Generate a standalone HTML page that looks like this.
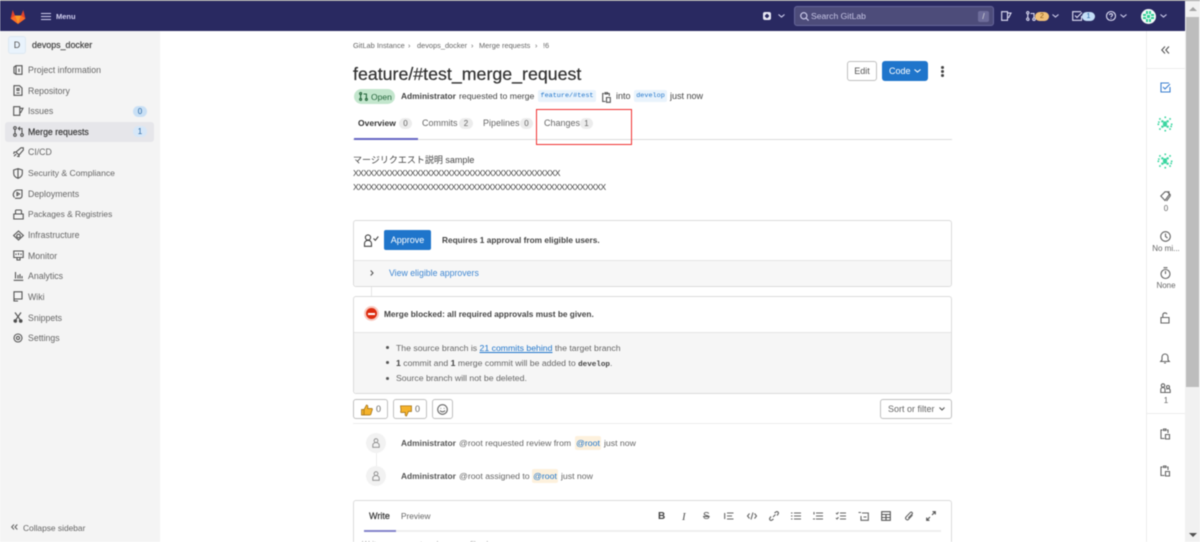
<!DOCTYPE html>
<html lang="ja"><head><meta charset="utf-8"><title>feature/#test_merge_request</title>
<style>
html,body{margin:0;padding:0;width:1200px;height:542px;overflow:hidden;background:#fff}
body{font-family:"Liberation Sans","Noto Sans CJK JP",sans-serif;font-size:9px;color:#303030;position:relative}
#root{position:absolute;left:0;top:0;width:1200px;height:542px;overflow:hidden;filter:blur(.45px)}
.a{position:absolute}
.t{position:absolute;white-space:nowrap;line-height:14px;height:14px;font-size:9px}
.b{font-weight:bold}
.g{color:#666}
.s{font-size:8.75px}
.bc{font-size:7.4px;top:39px;color:#666}
.l{color:#1f75cb}
.m{font-family:"Liberation Mono",monospace}
svg.i{position:absolute;fill:none;stroke:#555;stroke-width:1.1;overflow:visible}
.pill{position:absolute;border-radius:7px;height:11px;line-height:11px;text-align:center;font-size:8px;background:#ececec;color:#666}
.box{position:absolute;box-sizing:border-box;border:1px solid #dbdbdb;border-radius:3px;background:#fff}
.btn{position:absolute;box-sizing:border-box;border:1px solid #bfbfbf;border-radius:3px;background:#fff;text-align:center;font-size:9px;color:#444}
.code{position:absolute;background:#e9f3fc;color:#1f75cb;font-family:"Liberation Mono",monospace;font-size:6.8px;height:12px;line-height:12px;border-radius:2px;text-align:center}
.ref{position:absolute;height:14px;line-height:14px;background:#fdf1dd;color:#1f75cb;border-radius:2px;text-align:center;font-size:8.7px}
</style></head><body><div id="root">

<!-- header -->
<div class="a" style="left:0;top:0;width:1200px;height:1px;background:#999"></div>
<div class="a" style="left:0;top:1px;width:1185px;height:30px;background:#292961"></div>
<svg class="a" style="left:10px;top:9px" width="16" height="15" viewBox="0 0 16 15"><path fill="#e24329" d="M8 15 L0.6 9.5 L2.7 1 L5 6.5 H11 L13.3 1 L15.4 9.5Z"/><path fill="#fc6d26" d="M8 15 L0.6 9.5 L5 6.5Z M8 15 L15.4 9.5 L11 6.5Z"/><path fill="#fca326" d="M8 15 L5 6.5 H11Z" opacity=".9"/></svg>
<div class="a" style="left:41px;top:13px;width:10px;height:1.4px;background:#d1d0f0;box-shadow:0 3px 0 #d1d0f0,0 6px 0 #d1d0f0"></div>
<div class="t b" style="left:56px;top:10px;color:#d1d0f0;font-size:7.5px">Menu</div>

<div class="a" style="left:763px;top:12px;width:8px;height:8px;background:#e8e8f4;border-radius:2px"></div>
<div class="a" style="left:766px;top:14px;width:2px;height:4px;background:#292961"></div>
<div class="a" style="left:765px;top:15px;width:4px;height:2px;background:#292961"></div>
<svg class="i" style="left:778px;top:14px;stroke:#d1d0f0" width="7" height="4" viewBox="0 0 7 4"><path d="M.5.5 3.500 3 6.500.5"/></svg>
<div class="a" style="left:794px;top:6px;width:200px;height:20px;box-sizing:border-box;background:#4d4c7a;border:1px solid #67669a;border-radius:3px"></div>
<svg class="i" style="left:800px;top:12px;stroke:#d1d0f0" width="9" height="9" viewBox="0 0 9 9"><circle cx="3.8" cy="3.8" r="3.1"/><path d="M6 6 8.600 8.600"/></svg>
<div class="t" style="left:811px;top:9px;color:#c5c4e4;font-size:8.6px">Search GitLab</div>
<div class="a" style="left:978px;top:11px;width:11px;height:11px;background:#6d6c9a;border-radius:2px;color:#ddd;font-size:8px;line-height:11px;text-align:center">/</div>
<svg class="i" style="left:1001px;top:11px;stroke:#e0dff5" width="11" height="10" viewBox="0 0 11 10"><path d="M.7.7H6.500V9.300H.7Z M6.500 2H10L7.500 7"/></svg>
<svg class="i" style="left:1026px;top:11px;stroke:#e0dff5" width="10" height="10" viewBox="0 0 10 10"><circle cx="1.8" cy="1.8" r="1.2"/><circle cx="1.8" cy="8.2" r="1.2"/><circle cx="8" cy="8.2" r="1.2"/><path d="M1.800 3V7M8 7V2.500H4.500"/></svg>
<div class="a" style="left:1035px;top:12px;width:14px;height:9px;border-radius:5px;background:#f0c078;color:#8a5a10;font-size:7px;line-height:9px;text-align:center">2</div>
<svg class="i" style="left:1052px;top:14px;stroke:#d1d0f0" width="7" height="4" viewBox="0 0 7 4"><path d="M.5.5 3.500 3 6.500.5"/></svg>
<svg class="i" style="left:1072px;top:11px;stroke:#e0dff5" width="11" height="10" viewBox="0 0 11 10"><path d="M9 .7H.7V9.300H9.500V5M3 4.500 5 6.500 10 1.500"/></svg>
<div class="a" style="left:1082px;top:12px;width:13px;height:9px;border-radius:5px;background:#c4def7;color:#1f5f9f;font-size:7px;line-height:9px;text-align:center">1</div>
<svg class="i" style="left:1106px;top:11px;stroke:#e0dff5" width="10" height="10" viewBox="0 0 10 10"><circle cx="5" cy="5" r="4.5"/><path d="M3.500 4C3.500 2.200 6.500 2.200 6.500 4 6.500 5 5 5 5 6.300M5 7.200V8"/></svg>
<svg class="i" style="left:1120px;top:14px;stroke:#d1d0f0" width="7" height="4" viewBox="0 0 7 4"><path d="M.5.5 3.500 3 6.500.5"/></svg>
<svg class="a" style="left:1141px;top:9px" width="15" height="15" viewBox="0 0 15 15"><circle cx="7.500" cy="7.500" r="7.500" fill="#f4fbf8"/><path fill="#2ecf95" d="M5 2h2v3H5zM8 2h2v3H8zM2 5h3v2H2zM10 5h3v2h-3zM2 8h3v2H2zM10 8h3v2h-3zM5 10h2v3H5zM8 10h2v3H8zM6 6h3v3H6z"/></svg>
<svg class="i" style="left:1160px;top:14px;stroke:#d1d0f0" width="7" height="4" viewBox="0 0 7 4"><path d="M.5.5 3.500 3 6.500.5"/></svg>

<!-- scrollbar -->
<div class="a" style="left:1185px;top:1px;width:15px;height:541px;background:#f1f1f1"></div>
<div class="a" style="left:1186px;top:17px;width:13px;height:370px;background:#bdbdbd"></div>
<div class="a" style="left:1188.500px;top:7px;width:0;height:0;border:4px solid transparent;border-bottom:4px solid #a3a3a3;border-top:0"></div>
<div class="a" style="left:1188.500px;top:533px;width:0;height:0;border:4px solid transparent;border-top:4px solid #505050;border-bottom:0"></div>

<!-- left sidebar -->
<div class="a" style="left:0;top:31px;width:160px;height:511px;background:#f4f4f4"></div>
<div class="a" style="left:8px;top:36px;width:18px;height:18px;box-sizing:border-box;background:#e9f3fc;border:1px solid #dde8f2;border-radius:3px;text-align:center;line-height:16px;font-size:9px;color:#555">D</div>
<div class="t" style="left:32px;top:38px;color:#444;font-size:8.900px;-webkit-text-stroke:.2px #444">devops_docker</div>
<div class="a" style="left:5px;top:122px;width:149px;height:20px;background:#e6e6ea;border-radius:3px"></div>

<svg class="i" style="left:13px;top:65px" width="10" height="10" viewBox="0 0 10 10"><path d="M3 .7H9V9.300H3ZM3 .7 1 2V8L3 9.300M6 3.500V7"/></svg>
<div class="t g s" style="left:28px;top:63px">Project information</div>
<svg class="i" style="left:13px;top:85px" width="10" height="11" viewBox="0 0 10 11"><path d="M1 .7H6.500L9 3V10.300H1ZM4 3.500H6V5.500H4ZM3.500 8H6.500"/></svg>
<div class="t g s" style="left:28px;top:84px">Repository</div>
<svg class="i" style="left:13px;top:106px" width="11" height="10" viewBox="0 0 11 10"><path d="M.7.7H6.800V9.300H.7ZM6.800 2.300H10L7.500 7"/></svg>
<div class="t g s" style="left:28px;top:104px">Issues</div>
<div class="pill" style="left:133px;top:106px;width:14px;background:#c9e0f5;color:#2a6aa8">0</div>
<svg class="i" style="left:13px;top:126px" width="11" height="11" viewBox="0 0 11 11"><circle cx="2" cy="2" r="1.3"/><circle cx="2" cy="9" r="1.3"/><circle cx="9" cy="9" r="1.3"/><path d="M2 3.300V7.700M9 7.700V2.500H5.500M7 .8 5.300 2.500 7 4.200"/></svg>
<div class="t s" style="left:28px;top:125px;color:#333;-webkit-text-stroke:.15px #333">Merge requests</div>
<div class="pill" style="left:133px;top:126px;width:14px;background:#d6e7f8;color:#2a6aa8">1</div>
<svg class="i" style="left:13px;top:147px" width="11" height="10" viewBox="0 0 11 10"><path d="M3 5 8 .8H10.300V3L6 8 3 5ZM3 5H1.200L.7 7M6 8V9.500L4 9.300M3.300 7 1 9.200"/></svg>
<div class="t g s" style="left:28px;top:145px">CI/CD</div>
<svg class="i" style="left:13px;top:168px" width="10" height="11" viewBox="0 0 10 11"><path d="M5 .7 9.300 2V5.500C9.300 8 7 9.700 5 10.300 3 9.700.7 8 .7 5.500V2ZM5 1V10"/></svg>
<div class="t g" style="left:28px;top:166px;font-size:8.600px">Security &amp; Compliance</div>
<svg class="i" style="left:13px;top:189px" width="10" height="10" viewBox="0 0 10 10"><path d="M1.500 8.500A4.500 4.500 0 0 1 5 1H9V7A2.500 2.500 0 0 1 6 9.300H2M4 3.500 6.500 5 4 6.500Z"/></svg>
<div class="t g s" style="left:28px;top:187px">Deployments</div>
<svg class="i" style="left:13px;top:209px" width="11" height="11" viewBox="0 0 11 11"><path d="M.8 5H10.200V10H.8ZM2.500 5V2A1 1 0 0 1 3.500 1H7.500A1 1 0 0 1 8.500 2V5"/></svg>
<div class="t g" style="left:28px;top:207px;font-size:8.400px">Packages &amp; Registries</div>
<svg class="i" style="left:13px;top:230px" width="11" height="11" viewBox="0 0 11 11"><path d="M.6 5.500 5.500 1 10.400 5.500 5.500 10Z"/><circle cx="5.500" cy="6" r="1.800"/></svg>
<div class="t g s" style="left:28px;top:228px">Infrastructure</div>
<svg class="i" style="left:13px;top:250px" width="11" height="11" viewBox="0 0 11 11"><path d="M.8 1H10.200V7.500H.8ZM3 3.500V5M5.500 3V5M8 3.500V5M4 7.500V10H7V7.500"/></svg>
<div class="t g s" style="left:28px;top:249px">Monitor</div>
<svg class="i" style="left:13px;top:271px" width="11" height="10" viewBox="0 0 11 10"><path d="M.7 9.300H10.300M2.500 1V7.500M5 4V7.500M7 3V7.500M9 5V7.500"/></svg>
<div class="t g s" style="left:28px;top:269px">Analytics</div>
<svg class="i" style="left:13px;top:291px" width="10" height="11" viewBox="0 0 10 11"><path d="M1 .8H9V8H1ZM1 8V10H5"/></svg>
<div class="t g s" style="left:28px;top:290px">Wiki</div>
<svg class="i" style="left:13px;top:312px" width="10" height="11" viewBox="0 0 10 11"><path d="M2 .5 7 7.500M8 .5 3 7.500"/><circle cx="2.300" cy="9" r="1.300" fill="#444"/><circle cx="7.700" cy="9" r="1.300" fill="#444"/></svg>
<div class="t g s" style="left:28px;top:311px">Snippets</div>
<svg class="i" style="left:13px;top:333px" width="10" height="10" viewBox="0 0 10 10"><circle cx="5" cy="5" r="4"/><circle cx="5" cy="5" r="1.600"/></svg>
<div class="t g s" style="left:28px;top:331px">Settings</div>
<svg class="i" style="left:11px;top:524px;stroke:#666" width="7" height="6" viewBox="0 0 7 6"><path d="M3 .5.7 3 3 5.500M6.300.5 4 3 6.300 5.500"/></svg>
<div class="t g" style="left:23px;top:521px;font-size:8.400px">Collapse sidebar</div>

<!-- right sidebar -->
<div class="a" style="left:1146px;top:31px;width:1px;height:511px;background:#ececec"></div>
<div class="a" style="left:1147px;top:68px;width:38px;height:1px;background:#ececec"></div>
<div class="a" style="left:1147px;top:413px;width:38px;height:1px;background:#ececec"></div>
<svg class="i" style="left:1161px;top:46px" width="9" height="8" viewBox="0 0 9 8"><path d="M4 .5.8 4 4 7.500M8 .5 4.800 4 8 7.500"/></svg>
<svg class="i" style="left:1160px;top:82px;stroke:#3a7fd0" width="11" height="11" viewBox="0 0 11 11"><path d="M9 1H1V10H10V5M3 5 5 7 10 2"/></svg>
<svg class="a" style="left:1157px;top:116px" width="16" height="16" viewBox="0 0 15 15"><path fill="#3ad6a0" d="M4 4h2v2H4zM9 4h2v2H9zM6 5h3v1.500H6zM5.500 6.500h4v2h-4zM4 9h2v2H4zM9 9h2v2H9zM6 8.500h3V10H6zM2 2h1.500v1.500H2zM11.500 2H13v1.500h-1.500zM2 11.500h1.500V13H2zM11.500 11.500H13V13h-1.500zM7 .5h1.500V2H7zM7 13h1.500v1.500H7zM.5 7H2v1.500H.5zM13 7h1.500v1.500H13zM1 5h1.500v1.500H1zM12.500 9H14v1.500h-1.500z"/></svg>
<svg class="a" style="left:1157px;top:153px" width="16" height="16" viewBox="0 0 15 15"><path fill="#3ad6a0" d="M4 4h2v2H4zM9 4h2v2H9zM6 5h3v1.500H6zM5.500 6.500h4v2h-4zM4 9h2v2H4zM9 9h2v2H9zM6 8.500h3V10H6zM2 2h1.500v1.500H2zM11.500 2H13v1.500h-1.500zM2 11.500h1.500V13H2zM11.500 11.500H13V13h-1.500zM7 .5h1.500V2H7zM7 13h1.500v1.500H7zM.5 7H2v1.500H.5zM13 7h1.500v1.500H13zM1 5h1.500v1.500H1zM12.500 9H14v1.500h-1.500z"/></svg>
<svg class="i" style="left:1160px;top:191px;stroke:#666" width="11" height="11" viewBox="0 0 11 11"><path d="M.8 5 5 .8H9V4L5 9.500ZM7.500 1 10.200 3.500V5L6.500 10"/></svg>
<div class="t g" style="left:1147px;top:202px;width:38px;text-align:center;font-size:8px">0</div>
<svg class="i" style="left:1160px;top:231px;stroke:#666" width="11" height="11" viewBox="0 0 11 11"><circle cx="5.500" cy="5.500" r="4.800"/><path d="M5.500 2.500V5.500L7.500 7"/></svg>
<div class="t g" style="left:1147px;top:242px;width:38px;text-align:center;font-size:8px">No mi...</div>
<svg class="i" style="left:1160px;top:267px;stroke:#666" width="11" height="12" viewBox="0 0 11 12"><circle cx="5.500" cy="7" r="4.500"/><path d="M5.500 4V7M3.500.7H7.500"/></svg>
<div class="t g" style="left:1147px;top:279px;width:38px;text-align:center;font-size:8px">None</div>
<svg class="i" style="left:1160px;top:312px;stroke:#666" width="10" height="12" viewBox="0 0 10 12"><path d="M1 5.500H9V11H1ZM2.800 5.500V3A2.200 2.200 0 0 1 7 2.200"/></svg>
<svg class="i" style="left:1160px;top:352px;stroke:#666" width="10" height="12" viewBox="0 0 10 12"><path d="M.7 9.500H9.300L8 8V5A3 3 0 0 0 2 5V8ZM4 11H6"/></svg>
<svg class="i" style="left:1160px;top:383px;stroke:#666" width="11" height="11" viewBox="0 0 11 11"><circle cx="3" cy="2.500" r="1.700"/><circle cx="8" cy="4" r="1.500"/><path d="M.8 9.500V6.500A2 2 0 0 1 5 6.500V9.500ZM5.500 9.500H10.200V7.500A2 2 0 0 0 6.500 6.500"/></svg>
<div class="t g" style="left:1147px;top:394px;width:38px;text-align:center;font-size:8px">1</div>
<svg class="i" style="left:1160px;top:428px;stroke:#666" width="10" height="12" viewBox="0 0 10 12"><path d="M2.500 2H1V10.500H4.500M3.500 2.500V1H6V2.500ZM7 2H8V5M5.500 6.500H9.500V11H5.500Z"/></svg>
<svg class="i" style="left:1160px;top:465px;stroke:#666" width="10" height="12" viewBox="0 0 10 12"><path d="M2.500 2H1V10.500H4.500M3.500 2.500V1H6V2.500ZM7 2H8V5M5.500 6.500H9.500V11H5.500Z"/></svg>

<!-- breadcrumb -->
<div class="t bc" style="left:353px">GitLab Instance</div>
<div class="t bc" style="left:408px">›</div>
<div class="t bc" style="left:417px">devops_docker</div>
<div class="t bc" style="left:471px">›</div>
<div class="t bc" style="left:479px">Merge requests</div>
<div class="t bc" style="left:535px">›</div>
<div class="t bc" style="left:543px">!6</div>

<!-- title -->
<div class="a" style="left:353px;top:62px;white-space:nowrap;font-size:17.800px;line-height:24px;color:#303030;-webkit-text-stroke:.2px #303030">feature/#test_merge_request</div>
<div class="btn" style="left:847px;top:61px;width:30px;height:20px;line-height:18px;color:#555">Edit</div>
<div class="a" style="left:882px;top:61px;width:46px;height:20px;background:#1f75cb;border-radius:3px"></div>
<div class="t" style="left:889px;top:64px;color:#fff">Code</div>
<svg class="i" style="left:914px;top:69px;stroke:#fff" width="7" height="4" viewBox="0 0 7 4"><path d="M.5.5 3.500 3 6.500.5"/></svg>
<div class="a" style="left:941px;top:66px;width:3px;height:3px;border-radius:50%;background:#444;box-shadow:0 4px 0 #444,0 8px 0 #444"></div>

<!-- status line -->
<div class="a" style="left:354px;top:89px;width:41px;height:15px;border-radius:8px;background:#c3e6cd"></div>
<svg class="i" style="left:359px;top:92px;stroke:#24663b" width="9" height="9" viewBox="0 0 9 9"><circle cx="1.600" cy="1.600" r="1"/><circle cx="1.600" cy="7.400" r="1"/><circle cx="7.400" cy="7.400" r="1"/><path d="M1.600 2.600V6.400M7.400 6.400V2H4.500"/></svg>
<div class="t" style="left:371px;top:90px;color:#24663b;font-size:8.500px">Open</div>
<div class="t b" style="left:401px;top:89px;font-size:8.400px;color:#444">Administrator</div>
<div class="t" style="left:459px;top:89px;font-size:8.700px;color:#444">requested to merge</div>
<div class="code" style="left:538px;top:90px;width:58px">feature/#test</div>
<svg class="i" style="left:602px;top:92px;stroke:#555" width="9" height="11" viewBox="0 0 9 11"><path d="M2 1.500H.7V9.500H3.500M3 2V.7H5.500V2ZM6 1.500H7.300V4M4.500 5.500H8.300V10.300H4.500Z"/></svg>
<div class="t" style="left:616px;top:89px;color:#444">into</div>
<div class="code" style="left:634px;top:90px;width:33px">develop</div>
<div class="t" style="left:670px;top:89px;color:#444">just now</div>

<!-- tabs -->
<div class="a" style="left:353px;top:139px;width:599px;height:1px;background:#dcdcdc"></div>
<div class="a" style="left:354px;top:138px;width:64px;height:2px;background:#6666c4"></div>
<div class="t b" style="left:358px;top:116px;color:#333;font-size:8.500px">Overview</div>
<div class="pill" style="left:399px;top:118px;width:13px">0</div>
<div class="t g" style="left:422px;top:116px">Commits</div>
<div class="pill" style="left:459px;top:118px;width:14px">2</div>
<div class="t g" style="left:483px;top:116px">Pipelines</div>
<div class="pill" style="left:520px;top:118px;width:13px">0</div>
<div class="t g" style="left:544px;top:116px">Changes</div>
<div class="pill" style="left:580px;top:118px;width:13px">1</div>
<div class="a" style="left:536px;top:109px;width:96px;height:36px;box-sizing:border-box;border:1px solid #f03030"></div>

<!-- description -->
<div class="t" style="left:353px;top:153px;color:#444">マージリクエスト説明 sample</div>
<div class="t" style="left:353px;top:166px;color:#444;font-size:8.700px;letter-spacing:-.62px">XXXXXXXXXXXXXXXXXXXXXXXXXXXXXXXXXXXXXXXX</div>
<div class="t" style="left:353px;top:180px;color:#444;font-size:8.700px;letter-spacing:-.64px">XXXXXXXXXXXXXXXXXXXXXXXXXXXXXXXXXXXXXXXXXXXXXXXXX</div>

<!-- approve box -->
<div class="box" style="left:353px;top:220px;width:599px;height:67px"></div>
<div class="a" style="left:354px;top:260px;width:597px;height:25px;background:#f7f7f7;border-top:1px solid #e5e5e5;border-radius:0 0 3px 3px"></div>
<svg class="i" style="left:363px;top:234px;stroke:#444" width="16" height="13" viewBox="0 0 16 13"><circle cx="5" cy="3.500" r="2.600"/><path d="M1.500 12.300V9.500A3.500 3.200 0 0 1 8.500 9.500V12.300ZM10.500 4.500 12.300 6.300 15.300 2.500"/></svg>
<div class="a" style="left:384px;top:230px;width:47px;height:20px;background:#1f75cb;border-radius:2px;color:#fff;text-align:center;line-height:20px;font-size:9px">Approve</div>
<div class="t b" style="left:442px;top:233px;color:#444;font-size:8.300px">Requires 1 approval from eligible users.</div>
<svg class="i" style="left:370px;top:270px" width="4" height="6" viewBox="0 0 4 6"><path d="M.7.5 3 3 .7 5.500"/></svg>
<div class="t s" style="left:389px;top:266px;color:#3f87d2">View eligible approvers</div>
<div class="a" style="left:371px;top:287px;width:1px;height:10px;background:#e5e5e5"></div>

<!-- merge box -->
<div class="box" style="left:353px;top:296px;width:599px;height:98px"></div>
<div class="a" style="left:354px;top:332px;width:597px;height:60px;background:#f6f6f6;border-top:1px solid #e5e5e5;border-radius:0 0 3px 3px"></div>
<div class="a" style="left:364px;top:306px;width:15px;height:15px;border-radius:50%;background:#f8c9c0"></div>
<div class="a" style="left:366px;top:308px;width:11px;height:11px;border-radius:50%;background:#dd2b0e"></div>
<div class="a" style="left:368px;top:313px;width:7px;height:1.500px;background:#fff"></div>
<div class="t b" style="left:384px;top:307px;color:#444;font-size:8.300px">Merge blocked: all required approvals must be given.</div>
<div class="a" style="left:386px;top:346px;width:3px;height:3px;border-radius:50%;background:#555;box-shadow:0 15px 0 #555,0 31px 0 #555"></div>
<div class="t" style="left:396px;top:341px;color:#666;font-size:8.700px">The source branch is <span style="color:#1f75cb;text-decoration:underline">21 commits behind</span> the target branch</div>
<div class="t" style="left:396px;top:356px;color:#666;font-size:8.700px"><span class="b" style="color:#444">1</span> commit and <span class="b" style="color:#444">1</span> merge commit will be added to <span class="m b" style="color:#444;font-size:7.600px">develop</span>.</div>
<div class="t" style="left:396px;top:371px;color:#666;font-size:8.700px">Source branch will not be deleted.</div>

<!-- awards -->
<div class="btn" style="left:353px;top:399px;width:35px;height:20px"></div>
<svg class="a" style="left:361px;top:404px" width="12" height="12" viewBox="0 0 12 12"><path fill="#f5b32c" stroke="#9b6a10" stroke-width=".7" d="M.5 5.500H3V11H.5ZM3 5.500 5.500 1C7 1 7 2.500 6.700 4.500H11C11.500 4.500 11.500 6 11 6.500L9.800 10.500C9.600 11 9 11 8.500 11H3Z"/></svg>
<div class="t g" style="left:376px;top:402px">0</div>
<div class="btn" style="left:393px;top:399px;width:34px;height:20px"></div>
<svg class="a" style="left:400px;top:405px" width="12" height="12" viewBox="0 0 12 12"><path fill="#f5b32c" stroke="#9b6a10" stroke-width=".7" d="M.5.8H11.500V6.500H8.500L6.500 11C5 11 5 9.500 5.300 7.500H1C.5 7.500.5 6 1 5.500Z"/></svg>
<div class="t g" style="left:415px;top:402px">0</div>
<div class="btn" style="left:432px;top:399px;width:21px;height:20px"></div>
<svg class="i" style="left:437px;top:404px;stroke:#666" width="11" height="11" viewBox="0 0 11 11"><circle cx="5.500" cy="5.500" r="4.800"/><path d="M3 6.500C4 8.200 7 8.200 8 6.500M3.800 4V4.600M7.200 4V4.600"/></svg>
<div class="btn" style="left:880px;top:399px;width:72px;height:20px;line-height:18px;text-align:left;padding-left:7px;color:#666">Sort or filter</div>
<svg class="i" style="left:939px;top:407px;stroke:#555" width="6" height="4" viewBox="0 0 6 4"><path d="M.5.5 3 3 5.500 .5"/></svg>
<div class="a" style="left:353px;top:423px;width:599px;height:1px;background:#ededed"></div>

<!-- notes -->
<div class="a" style="left:376px;top:445px;width:1px;height:25px;background:#ececec"></div>
<div class="a" style="left:366px;top:433px;width:20px;height:20px;border-radius:50%;background:#f2f2f2"></div>
<svg class="i" style="left:372px;top:438px;stroke:#888;stroke-width:.9" width="8" height="10" viewBox="0 0 8 10"><circle cx="4" cy="2.600" r="1.900"/><path d="M.8 9.300V7A3.200 2.400 0 0 1 7.200 7V9.300Z"/></svg>
<div class="t b" style="left:401px;top:436px;color:#555;font-size:8.400px">Administrator</div>
<div class="t" style="left:459px;top:436px;color:#666;font-size:8.700px">@root requested review from</div>
<div class="ref" style="left:575px;top:436px;width:26px">@root</div>
<div class="t" style="left:604px;top:436px;color:#666;font-size:8.700px">just now</div>
<div class="a" style="left:366px;top:466px;width:20px;height:20px;border-radius:50%;background:#f2f2f2"></div>
<svg class="i" style="left:372px;top:471px;stroke:#888;stroke-width:.9" width="8" height="10" viewBox="0 0 8 10"><circle cx="4" cy="2.600" r="1.900"/><path d="M.8 9.300V7A3.200 2.400 0 0 1 7.200 7V9.300Z"/></svg>
<div class="t b" style="left:401px;top:469px;color:#555;font-size:8.400px">Administrator</div>
<div class="t" style="left:459px;top:469px;color:#666;font-size:8.700px">@root assigned to</div>
<div class="ref" style="left:532px;top:469px;width:26px">@root</div>
<div class="t" style="left:561px;top:469px;color:#666;font-size:8.700px">just now</div>

<!-- editor -->
<div class="box" style="left:353px;top:500px;width:599px;height:60px"></div>
<div class="a" style="left:364px;top:530px;width:577px;height:2px;background:#eeeeee"></div>
<div class="a" style="left:364px;top:530px;width:32px;height:2px;background:#8585cc"></div>
<div class="t" style="left:369px;top:509px;color:#333;-webkit-text-stroke:.2px #333">Write</div>
<div class="t g" style="left:401px;top:509px;font-size:8.300px">Preview</div>
<div class="t b" style="left:658px;top:510px;color:#444;font-size:10px">B</div>
<div class="t" style="left:682px;top:510px;color:#555;font-size:11px;font-style:italic;font-family:'Liberation Serif',serif">I</div>
<div class="t" style="left:703px;top:510px;color:#555;font-size:10px;text-decoration:line-through">S</div>
<svg class="i" style="left:724px;top:512px;stroke:#666" width="10" height="8" viewBox="0 0 10 8"><path d="M.7 1V7M3 1H9.500M3 4H8M3 7H9.500"/></svg>
<svg class="i" style="left:747px;top:512px;stroke:#666" width="10" height="8" viewBox="0 0 10 8"><path d="M2.500 1.500 .5 4 2.500 6.500M7.500 1.500 9.500 4 7.500 6.500M6 .5 4 7.500"/></svg>
<svg class="i" style="left:769px;top:511px;stroke:#666" width="10" height="10" viewBox="0 0 10 10"><path d="M4 6 6.500 3.500M5.500 2 7 .9A1.500 1.500 0 0 1 9.100 3L8 4.500M4.500 8 3 9.100A1.500 1.500 0 0 1 .9 7L2 5.500"/></svg>
<svg class="i" style="left:791px;top:512px;stroke:#666" width="10" height="8" viewBox="0 0 10 8"><path d="M3 1H10M3 4H10M3 7H10M0 1H1.500M0 4H1.500M0 7H1.500"/></svg>
<svg class="i" style="left:813px;top:512px;stroke:#666" width="10" height="8" viewBox="0 0 10 8"><path d="M3 1H10M3 4H10M3 7H10M1 0V2.500M0 7H2"/></svg>
<svg class="i" style="left:836px;top:512px;stroke:#666" width="10" height="8" viewBox="0 0 10 8"><path d="M4 1H10M4 4H10M4 7H10M0 1 1 2 2.500 .3M0 6 1 7 2.500 5.300"/></svg>
<svg class="i" style="left:858px;top:511px;stroke:#666" width="11" height="10" viewBox="0 0 11 10"><path d="M4 2H10.300V9.300H3V5M5.500 6H8.500M.5 1.500H3"/></svg>
<svg class="i" style="left:881px;top:511px;stroke:#555" width="10" height="10" viewBox="0 0 10 10"><path d="M.7.7H9.300V9.300H.7ZM.7 3.500H9.300M.7 6.500H9.300M5 3.500V9.300"/></svg>
<svg class="i" style="left:904px;top:511px;stroke:#666" width="10" height="10" viewBox="0 0 10 10"><path d="M8.500 4 4.500 8.300C3 9.800.6 7.800 2 6L6.300 1.500C7.500.4 9.200 2 8 3.300L4.300 7"/></svg>
<svg class="i" style="left:926px;top:511px;stroke:#555" width="10" height="10" viewBox="0 0 10 10"><path d="M6 4 9.300.7M6.500.7H9.300V3.500M4 6 .7 9.300M.7 6.500V9.300H3.500"/></svg>
<div class="t" style="left:362px;top:538px;color:#999;font-size:8px">Write a comment or drag your files here…</div>

</div></body></html>
